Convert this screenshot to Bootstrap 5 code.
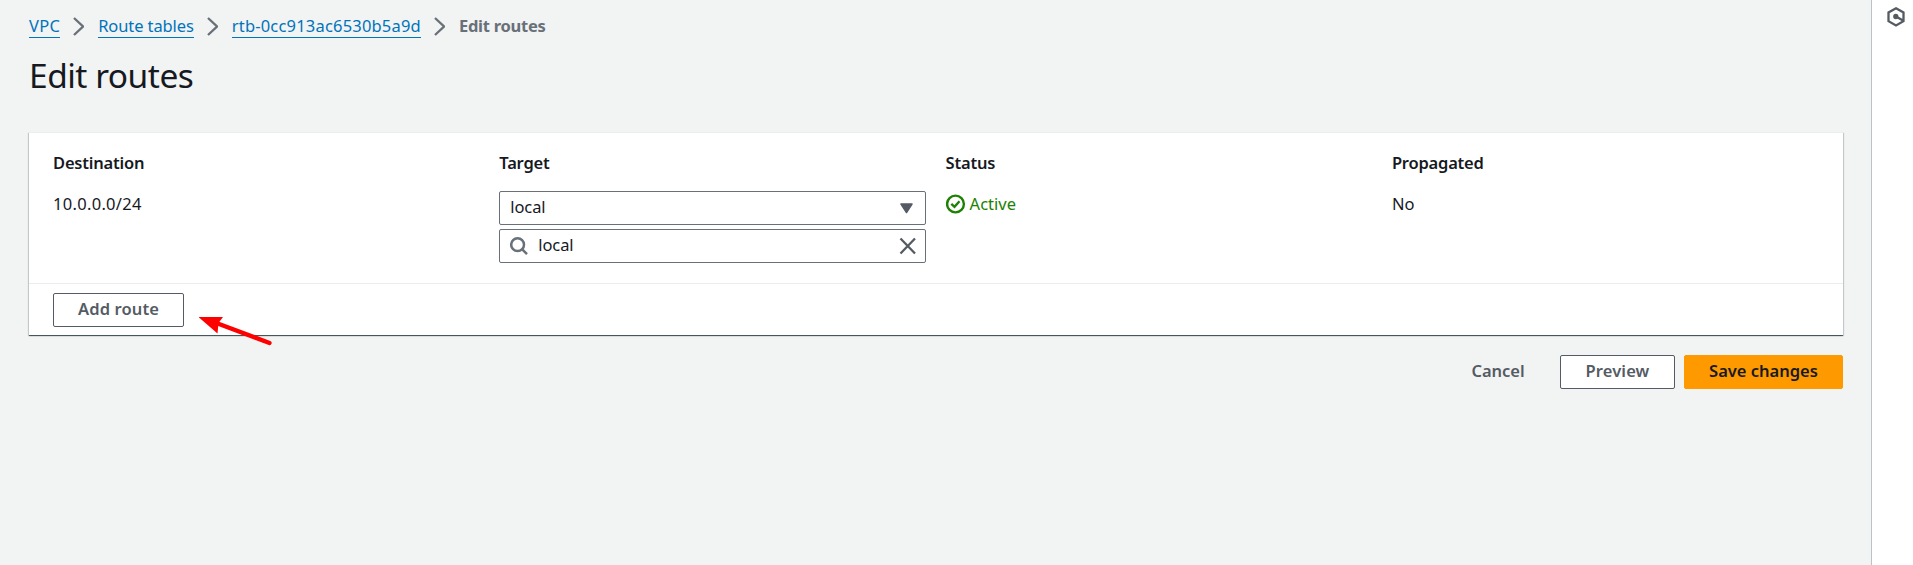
<!DOCTYPE html>
<html lang="en">
<head>
<meta charset="utf-8">
<meta name="viewport" content="width=device-width, initial-scale=1">
<title>Edit routes</title>
<link href="https://cdn.jsdelivr.net/npm/bootstrap@5.3.0/dist/css/bootstrap.min.css" rel="stylesheet">
<style>
  body { font-family: "Noto Sans", "Open Sans", sans-serif; font-size: 16.5px; line-height: 24px; color: #16191f; background: #f2f3f3; height: 565px; overflow: hidden; }
  svg { display: block; flex: none; }
  .page { padding: 14px 28px 0 29px; min-width: 0; }
  .crumbs { height: 24px; }
  .crumbs a { color: #0073bb; text-decoration: none; border-bottom: 1px solid #0073bb; line-height: 21px; height: 23px; }
  .crumbs a.vpc { letter-spacing: .3px; }
  .crumbs a.tables { letter-spacing: -.11px; }
  .crumbs a.rtb { letter-spacing: .19px; }
  .crumbs svg { margin: 0 14px 0 13px; }
  .crumbs .current { color: #687078; font-weight: 700; letter-spacing: -.25px; }
  h1 { font-size: 33.5px; line-height: 44px; font-weight: 400; letter-spacing: -.5px; margin: 15px 0 35px; }
  .panel { background: #fff; border-top: 1px solid #eaeded; box-shadow: 0 1px 1px 0 rgba(0,28,36,.3), 1px 1px 1px 0 rgba(0,28,36,.15), -1px 1px 1px 0 rgba(0,28,36,.15), 0 1px 0 #879596; height: 203px; }
  .routes { padding: 18px 0 0 24px; height: 150px; }
  .routes .col { flex: 0 0 446.3px; }
  .routes .col:last-child { flex: 1 1 0; }
  .heading { font-weight: 600; letter-spacing: -.2px; margin-bottom: 17px; }
  .num { letter-spacing: .3px; }
  .field { width: 427px; height: 34px; border: 1px solid #687078; border-radius: 2px; padding: 0 8px 0 10px; letter-spacing: -.1px; margin-top: -1px; }
  .field + .field { margin-top: 4px; }
  .field > span { line-height: 31px; height: 34px; }
  .field .query { padding-left: 10px; }
  .active-state { color: #1d8102; }
  .panel-foot { border-top: 1px solid #eaeded; padding: 9px 24px; height: 53px; }
  .btn-aws { --bs-btn-font-size: 16.5px; --bs-btn-line-height: 24px; --bs-btn-padding-y: 0; --bs-btn-padding-x: 0; --bs-btn-border-radius: 2px; --bs-btn-font-weight: 600; --bs-btn-color: #545b64; --bs-btn-bg: #fff; --bs-btn-border-color: #545b64; height: 34px; padding-bottom: 2px; letter-spacing: .12px; }
  .btn-save { --bs-btn-color: #16191f; --bs-btn-bg: #ff9900; --bs-btn-border-color: #ff9900; width: 159px; letter-spacing: 0; }
  .btn-plain { --bs-btn-bg: transparent; --bs-btn-border-color: transparent; width: 106px; letter-spacing: -.05px; margin-right: 9px; }
  .btn-add { width: 131px; }
  .btn-preview { width: 115px; margin-right: 9px; }
  .pointer { left: 170px; top: 184px; }
  .rail { width: 42px; border-left: 1px solid #bcc3c4; padding: 7px 0 0 15px; }
</style>
</head>
<body class="d-flex">
<svg width="0" height="0" class="position-absolute"><defs><g id="chev"><path d="M1 1 10 9.5 1 18" fill="none" stroke="#687078" stroke-width="2.3"/></g></defs></svg>
<main class="page flex-grow-1">
  <nav class="crumbs d-flex align-items-center">
    <a class="vpc" href="#">VPC</a>
    <svg width="11" height="19"><use href="#chev"/></svg>
    <a class="tables" href="#">Route tables</a>
    <svg width="11" height="19"><use href="#chev"/></svg>
    <a class="rtb" href="#">rtb-0cc913ac6530b5a9d</a>
    <svg width="11" height="19"><use href="#chev"/></svg>
    <span class="current">Edit routes</span>
  </nav>
  <h1>Edit routes</h1>
  <section class="panel position-relative">
    <div class="routes d-flex">
      <div class="col"><div class="heading">Destination</div><div class="num">10.0.0.0/24</div></div>
      <div class="col">
        <div class="heading">Target</div>
        <div class="field d-flex align-items-center justify-content-between">
          <span>local</span>
          <svg width="20" height="20"><path d="M4 6h11L9.5 14.5z" fill="#545b64" stroke="#545b64" stroke-width="1.5" stroke-linejoin="round"/></svg>
        </div>
        <div class="field d-flex align-items-center">
          <svg width="18" height="20" fill="none" stroke="#687078" stroke-width="2.5"><circle cx="7.6" cy="8.7" r="6.4"/><path d="m12 13.2 5 5"/></svg>
          <span class="query flex-grow-1">local</span>
          <svg width="18" height="18"><path d="m1.5 1.5 14.5 15M16 1.5l-14.5 15" stroke="#545b64" stroke-width="2.3"/></svg>
        </div>
      </div>
      <div class="col">
        <div class="heading">Status</div>
        <div class="active-state d-flex align-items-center gap-1">
          <svg width="20" height="20" fill="none" stroke="#1d8102" stroke-width="2.4"><circle cx="9.5" cy="10" r="8.4"/><path d="m5.3 9.800 3.200 3 5-5.500"/></svg>
          <span>Active</span>
        </div>
      </div>
      <div class="col"><div class="heading">Propagated</div><div>No</div></div>
    </div>
    <div class="panel-foot"><button class="btn btn-aws btn-add">Add route</button></div>
    <svg class="pointer position-absolute" width="78" height="34"><path d="M20 7 70.500 26" stroke="#f00" stroke-width="4.300" stroke-linecap="round"/><path d="M-.5 0H24L19.500 6 18.500 16.500z" fill="#f00"/></svg>
  </section>
  <div class="d-flex justify-content-end mt-3 pt-1">
    <button class="btn btn-aws btn-plain">Cancel</button>
    <button class="btn btn-aws btn-preview">Preview</button>
    <button class="btn btn-aws btn-save">Save changes</button>
  </div>
</main>
<aside class="rail bg-white flex-shrink-0">
  <svg width="18" height="20" fill="none" stroke="#545b64" stroke-width="2.3"><path d="M9 1.300 16.500 5.400v8.800L9 18.500 1.500 14.200V5.400z"/><path d="m9 9.500 7 4"/><circle cx="8.800" cy="9.500" r="1.500" fill="#545b64"/></svg>
</aside>
<script src="https://cdn.jsdelivr.net/npm/bootstrap@5.3.0/dist/js/bootstrap.bundle.min.js"></script>
</body>
</html>
